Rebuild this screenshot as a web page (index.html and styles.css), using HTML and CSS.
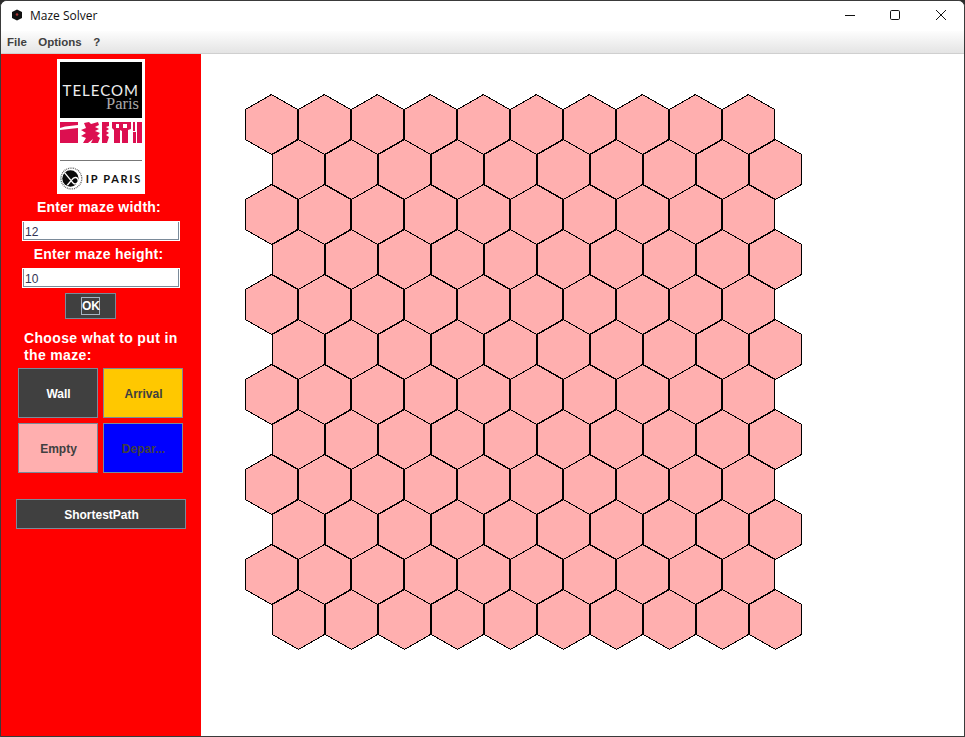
FILE: index.html
```html
<!DOCTYPE html>
<html lang="en">
<head>
<meta charset="utf-8">
<title>Maze Solver</title>
<link rel="stylesheet" href="styles.css">
</head>
<body>
<div class="window">
  <header class="titlebar">
    <div class="title-left">
      <svg class="app-icon" width="12" height="12" viewBox="0 0 12 12"><polygon points="6,0.5 11,3 11,9 6,11.5 1,9 1,3" fill="#111"/><circle cx="6" cy="5.5" r="1.3" fill="#a33"/></svg>
      <span class="title-text">Maze Solver</span>
    </div>
    <div class="controls">
      <svg class="ctrl" width="45" height="30" viewBox="0 0 45 30"><path d="M17 14.5H27" stroke="#111" fill="none"/></svg>
      <svg class="ctrl" width="45" height="30" viewBox="0 0 45 30"><rect x="17.5" y="9.5" width="9" height="9" rx="1.2" stroke="#111" fill="none"/></svg>
      <svg class="ctrl" width="45" height="30" viewBox="0 0 45 30"><path d="M18 9L28 19M28 9L18 19" stroke="#111" fill="none"/></svg>
    </div>
  </header>
  <nav class="menubar">
    <span class="menu-item">File</span>
    <span class="menu-item">Options</span>
    <span class="menu-item">?</span>
  </nav>
  <main class="content">
    <aside class="sidebar">
      <div class="logo">
        <div class="logo-black">
          <span class="logo-telecom">TELECOM</span>
          <span class="logo-paris">Paris</span>
        </div>
        <svg class="logo-band" width="82" height="22" viewBox="0 0 82 22">
          <g fill="#dc0f50">
            <path d="M0 0H18V3L5 4.5L0 6ZM0 8L18 6V21H0Z"/>
            <path d="M24 1L29 0L31 2L38 0L39 3L35 5L39 7L35 9L40 11L37 14L40 16L38 21H31L33 17L28 21H23L26 16L21 14L26 11L21 8L26 6Z"/>
            <path d="M42 0H49V4L46 5L49 7L46 9L49 11L46 13L49 15L47 21H42Z"/>
            <path d="M52 0H71V7L68 8V21H62V9L60 8V21H54V8L52 6ZM56 2V6H59V2ZM63 2V6H67V2Z"/>
            <rect x="73" y="0" width="2" height="9"/>
            <rect x="73" y="10" width="3" height="11"/>
            <rect x="77" y="0" width="5" height="21"/>
          </g>
        </svg>
        <div class="logo-rule"></div>
        <div class="logo-ip">
          <svg width="25" height="25" viewBox="0 0 25 25">
            <circle cx="12.5" cy="12.5" r="11.5" fill="none" stroke="#555" stroke-width="1.4" stroke-dasharray="1 1"/>
            <circle cx="11.5" cy="12.5" r="9" fill="#0a0a0a"/>
            <path d="M5 6L14 17C16 20 21 18 20 14C19 10 15 11 13 14L8 20" stroke="#fff" stroke-width="1.5" fill="none"/>
          </svg>
          <span class="logo-ip-text">IP PARIS</span>
        </div>
      </div>
      <label class="field-label">Enter maze width:</label>
      <div class="field">12</div>
      <label class="field-label second">Enter maze height:</label>
      <div class="field">10</div>
      <button class="ok-btn"><span class="ok-focus">OK</span></button>
      <p class="choose">Choose what to put in the maze:</p>
      <div class="palette">
        <button class="tile tile-wall">Wall</button>
        <button class="tile tile-arrival">Arrival</button>
        <button class="tile tile-empty">Empty</button>
        <button class="tile tile-departure">Depar...</button>
      </div>
      <button class="path-btn">ShortestPath</button>
    </aside>
    <section class="board">
      <svg class="maze" width="764" height="683" viewBox="0 0 764 683">
        <defs>
          <polygon id="hex" points="26,0 52,15 52,45 26,60 0,45 0,15"/>
          <g id="row">
            <use href="#hex" x="0"/><use href="#hex" x="53"/><use href="#hex" x="106"/><use href="#hex" x="159"/><use href="#hex" x="212"/><use href="#hex" x="265"/><use href="#hex" x="318"/><use href="#hex" x="371"/><use href="#hex" x="424"/><use href="#hex" x="477"/>
          </g>
        </defs>
        <g class="hexes" transform="translate(44.5 40.5)">
          <use href="#row" x="0" y="0"/>
          <use href="#row" x="27" y="45"/>
          <use href="#row" x="0" y="90"/>
          <use href="#row" x="27" y="135"/>
          <use href="#row" x="0" y="180"/>
          <use href="#row" x="27" y="225"/>
          <use href="#row" x="0" y="270"/>
          <use href="#row" x="27" y="315"/>
          <use href="#row" x="0" y="360"/>
          <use href="#row" x="27" y="405"/>
          <use href="#row" x="0" y="450"/>
          <use href="#row" x="27" y="495"/>
        </g>
      </svg>
    </section>
  </main>
</div>
</body>
</html>
```

FILE: styles.css
```css
* { box-sizing: border-box; }
html, body { margin: 0; padding: 0; background: #2b2b2b; }
body { width: 965px; height: 737px; overflow: hidden; font-family: "Liberation Sans", Arial, sans-serif; }
.window {
  width: 965px; height: 737px;
  display: flex; flex-direction: column;
  background: #fff;
  border: 1px solid #3a3a3a;
  border-radius: 7px 7px 0 0;
  overflow: hidden;
}
.titlebar {
  height: 30px; flex: none;
  display: flex; justify-content: space-between; align-items: center;
  background: #fff;
}
.title-left { display: flex; align-items: center; padding: 0 0 2px 10px; }
.app-icon { display: block; }
.title-text { font: 12px "Open Sans", sans-serif; color: #111; margin-left: 7px; }
.controls { display: flex; padding-right: 1px; }
.ctrl { display: block; }
.menubar {
  height: 23px; flex: none;
  display: flex; align-items: center; gap: 11.5px;
  padding: 0 0 0 6px;
  background: linear-gradient(#fdfdfd, #e4e4e4);
  border-bottom: 1px solid #cfcfcf;
  font-size: 11.5px; font-weight: bold; color: #404040;
}
.content { flex: 1; display: flex; min-height: 0; }
.sidebar {
  width: 200px; flex: none;
  background: #f00;
  display: flex; flex-direction: column; align-items: center;
  padding-top: 5px;
}
.logo {
  width: 88px; height: 135px;
  background: #fff;
  display: flex; flex-direction: column; align-items: center;
  padding-top: 3px;
}
.logo-black {
  width: 82px; height: 56px; background: #000;
  display: flex; flex-direction: column; align-items: flex-end;
  padding: 21px 3px 0 0; line-height: 1;
}
.logo-telecom { font: 15px/14px Lato, sans-serif; color: #eee; letter-spacing: 1px; }
.logo-paris { font: 16.5px/13px "Liberation Serif", serif; color: #aaa; }
.logo-band { display: block; margin-top: 4px; }
.logo-rule { width: 82px; height: 1px; background: #777; margin-top: 16px; }
.logo-ip { width: 82px; display: flex; align-items: center; gap: 3px; margin-top: 5px; }
.logo-ip svg { display: block; }
.logo-ip-text { font: bold 11px Lato, sans-serif; color: #111; letter-spacing: 1.7px; white-space: nowrap; }
.field-label {
  font-size: 14px; font-weight: bold; color: #fff; line-height: 16px;
  letter-spacing: 0.25px;
  margin-top: 5px; margin-right: 4px;
}
.field-label.second { margin-top: 5px; margin-right: 5px; }
.field {
  width: 158px; height: 20px; margin-top: 6px;
  background: #fff;
  border: 1px solid #fff;
  box-shadow: inset 1px 0 #7a8a99, inset -1px 0 #7a8a99, inset 0 -1px #7a8a99;
  font-size: 12px; line-height: 20px; padding-left: 2px; color: #333355;
}
.ok-btn {
  width: 51px; height: 26px; margin-top: 5px; margin-right: 21px; padding: 0;
  display: flex; align-items: center; justify-content: center;
  background: #404040; border: 1px solid #7a8a99; color: #fff;
  font: bold 12px "Liberation Sans", sans-serif;
}
.ok-focus { border: 1px solid #a5b4c4; height: 18px; width: 19px; line-height: 16px; text-align: center; display: block; }
.choose {
  width: 170px; margin: 11px 0 0 23px;
  font-size: 14px; font-weight: bold; color: #fff; line-height: 17px;
  letter-spacing: 0.35px;
  align-self: flex-start;
}
.palette {
  display: grid; grid-template-columns: 80px 80px; grid-auto-rows: 50px; gap: 5px;
  margin: 4px 0 0 17px; align-self: flex-start;
}
.tile {
  border: 1px solid #7a8a99; padding: 2px 0 0 1px;
  font: bold 12px "Liberation Sans", sans-serif;
  color: #404040;
}
.tile-wall { background: #404040; color: #fff; }
.tile-arrival { background: #ffc800; }
.tile-empty { background: #ffafaf; }
.tile-departure { background: #00f; }
.path-btn {
  width: 170px; height: 30px; margin: 26px 0 0 15px; padding: 2px 0 0 1px;
  align-self: flex-start;
  background: #404040; border: 1px solid #7a8a99; color: #fff;
  font: bold 12px "Liberation Sans", sans-serif;
}
.board { flex: 1; background: #fff; min-width: 0; }
.maze { display: block; }
.hexes { fill: #ffafaf; stroke: #000; stroke-width: 1; shape-rendering: crispEdges; }
```
